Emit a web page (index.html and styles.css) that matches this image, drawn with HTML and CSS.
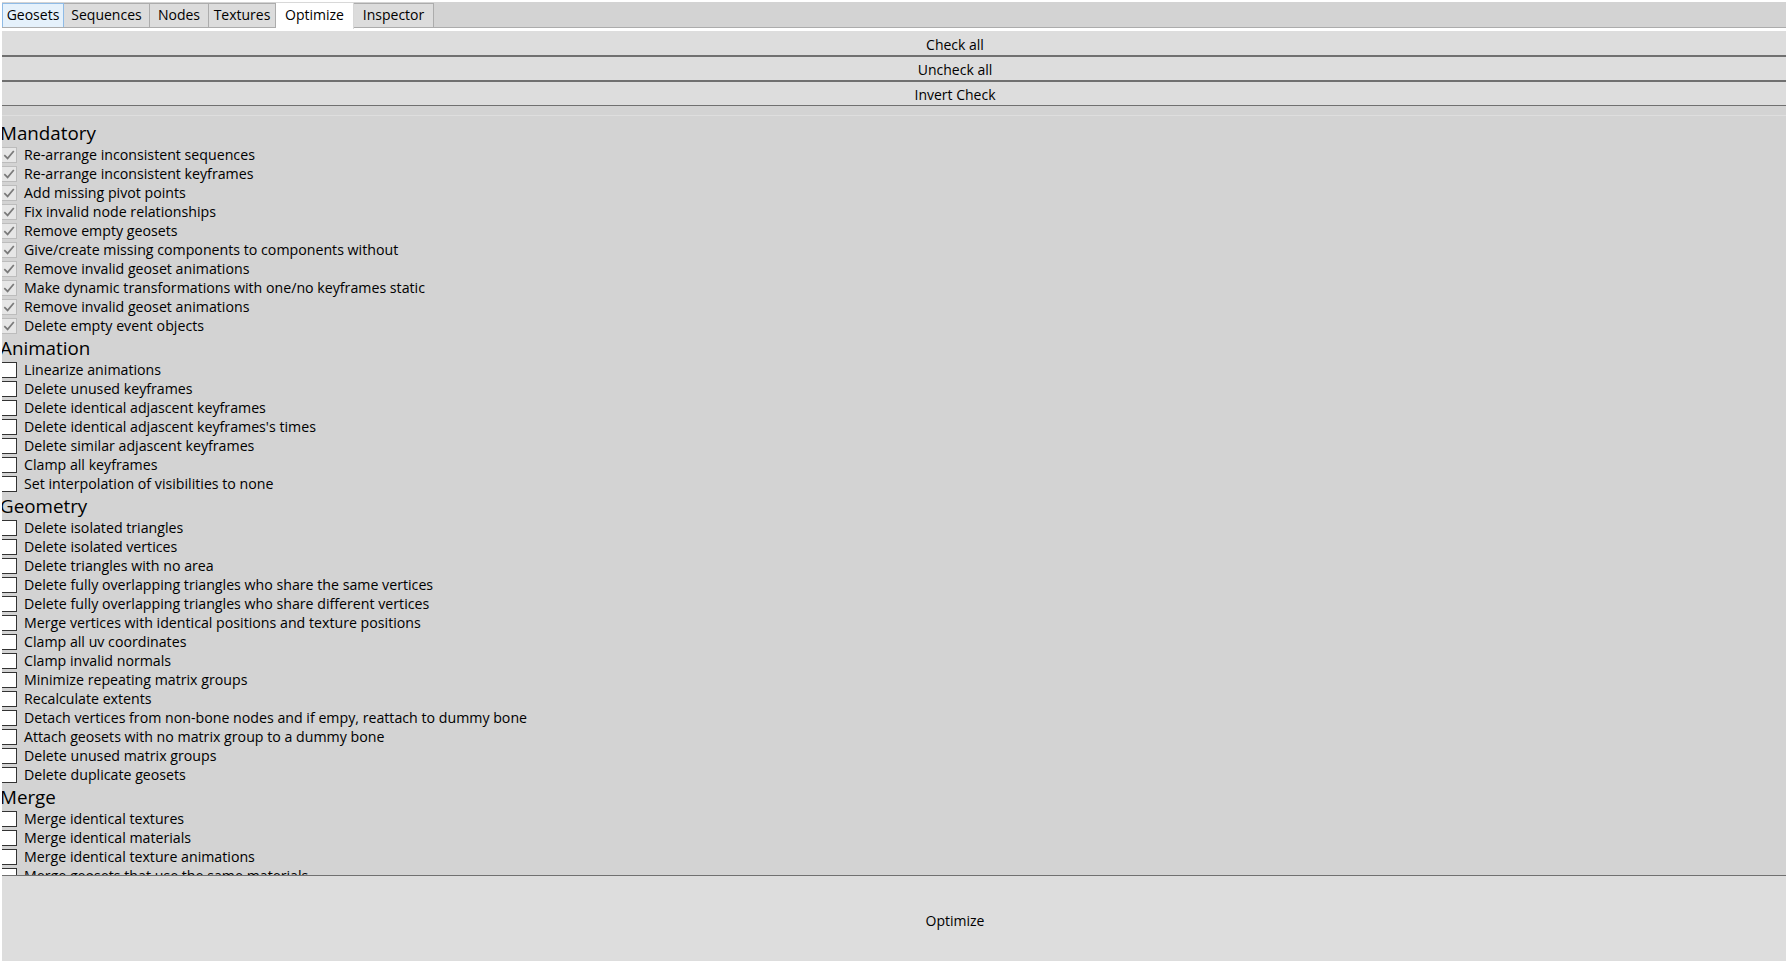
FILE: index.html
```html
<!DOCTYPE html>
<html>
<head>
<meta charset="utf-8">
<link rel="stylesheet" href="styles.css">
</head>
<body>
<div class="app">
  <div class="tabstrip">
    <div class="tab hover w-geo">Geosets</div>
    <div class="tab w-seq">Sequences</div>
    <div class="tab w-nod">Nodes</div>
    <div class="tab w-tex">Textures</div>
    <div class="tab selected w-opt">Optimize</div>
    <div class="tab w-ins">Inspector</div>
  </div>
  <div class="panel">
    <div class="whiteline"></div>
    <div class="btn first">Check all</div>
    <div class="btn">Uncheck all</div>
    <div class="btn">Invert Check</div>
    <div class="spacer"></div>
    <div class="sep"></div>
    <div class="list">
      <div class="hdr">Mandatory</div>
      <div class="item"><span class="box on"><svg viewBox="0 0 14 14"><path d="M2.3 7.2 L5.6 10.4 L11.8 3"/></svg></span><span>Re-arrange inconsistent sequences</span></div>
      <div class="item"><span class="box on"><svg viewBox="0 0 14 14"><path d="M2.3 7.2 L5.6 10.4 L11.8 3"/></svg></span><span>Re-arrange inconsistent keyframes</span></div>
      <div class="item"><span class="box on"><svg viewBox="0 0 14 14"><path d="M2.3 7.2 L5.6 10.4 L11.8 3"/></svg></span><span>Add missing pivot points</span></div>
      <div class="item"><span class="box on"><svg viewBox="0 0 14 14"><path d="M2.3 7.2 L5.6 10.4 L11.8 3"/></svg></span><span>Fix invalid node relationships</span></div>
      <div class="item"><span class="box on"><svg viewBox="0 0 14 14"><path d="M2.3 7.2 L5.6 10.4 L11.8 3"/></svg></span><span>Remove empty geosets</span></div>
      <div class="item"><span class="box on"><svg viewBox="0 0 14 14"><path d="M2.3 7.2 L5.6 10.4 L11.8 3"/></svg></span><span>Give/create missing components to components without</span></div>
      <div class="item"><span class="box on"><svg viewBox="0 0 14 14"><path d="M2.3 7.2 L5.6 10.4 L11.8 3"/></svg></span><span>Remove invalid geoset animations</span></div>
      <div class="item"><span class="box on"><svg viewBox="0 0 14 14"><path d="M2.3 7.2 L5.6 10.4 L11.8 3"/></svg></span><span>Make dynamic transformations with one/no keyframes static</span></div>
      <div class="item"><span class="box on"><svg viewBox="0 0 14 14"><path d="M2.3 7.2 L5.6 10.4 L11.8 3"/></svg></span><span>Remove invalid geoset animations</span></div>
      <div class="item"><span class="box on"><svg viewBox="0 0 14 14"><path d="M2.3 7.2 L5.6 10.4 L11.8 3"/></svg></span><span>Delete empty event objects</span></div>

      <div class="hdr">Animation</div>
      <div class="item"><span class="box"></span><span>Linearize animations</span></div>
      <div class="item"><span class="box"></span><span>Delete unused keyframes</span></div>
      <div class="item"><span class="box"></span><span>Delete identical adjascent keyframes</span></div>
      <div class="item"><span class="box"></span><span>Delete identical adjascent keyframes's times</span></div>
      <div class="item"><span class="box"></span><span>Delete similar adjascent keyframes</span></div>
      <div class="item"><span class="box"></span><span>Clamp all keyframes</span></div>
      <div class="item"><span class="box"></span><span>Set interpolation of visibilities to none</span></div>

      <div class="hdr">Geometry</div>
      <div class="item"><span class="box"></span><span>Delete isolated triangles</span></div>
      <div class="item"><span class="box"></span><span>Delete isolated vertices</span></div>
      <div class="item"><span class="box"></span><span>Delete triangles with no area</span></div>
      <div class="item"><span class="box"></span><span>Delete fully overlapping triangles who share the same vertices</span></div>
      <div class="item"><span class="box"></span><span>Delete fully overlapping triangles who share different vertices</span></div>
      <div class="item"><span class="box"></span><span>Merge vertices with identical positions and texture positions</span></div>
      <div class="item"><span class="box"></span><span>Clamp all uv coordinates</span></div>
      <div class="item"><span class="box"></span><span>Clamp invalid normals</span></div>
      <div class="item"><span class="box"></span><span>Minimize repeating matrix groups</span></div>
      <div class="item"><span class="box"></span><span>Recalculate extents</span></div>
      <div class="item"><span class="box"></span><span>Detach vertices from non-bone nodes and if empy, reattach to dummy bone</span></div>
      <div class="item"><span class="box"></span><span>Attach geosets with no matrix group to a dummy bone</span></div>
      <div class="item"><span class="box"></span><span>Delete unused matrix groups</span></div>
      <div class="item"><span class="box"></span><span>Delete duplicate geosets</span></div>

      <div class="hdr">Merge</div>
      <div class="item"><span class="box"></span><span>Merge identical textures</span></div>
      <div class="item"><span class="box"></span><span>Merge identical materials</span></div>
      <div class="item"><span class="box"></span><span>Merge identical texture animations</span></div>
      <div class="item"><span class="box"></span><span>Merge geosets that use the same materials</span></div>
      <div class="item"><span class="box"></span><span>Merge identical geoset animations</span></div>
    </div>
    <div class="btn bottom">Optimize</div>
  </div>
</div>
</body>
</html>
```
FILE: styles.css
```css
html, body {
  margin: 0;
  padding: 0;
}
body {
  margin: 2px;
  background: #ffffff;
  font-family: "Open Sans", "Noto Sans", "DejaVu Sans", sans-serif;
  color: #000000;
}
.app {
  width: 1784px;
  height: 959px;
  overflow: hidden;
  background: #d3d3d3;
}
.tabstrip {
  display: flex;
  align-items: flex-end;
  height: 25px;
}
.tab {
  box-sizing: border-box;
  height: 24px;
  border: 1px solid #acacac;
  border-bottom: none;
  background: #dcdcdc;
  font-size: 14px;
  line-height: 22px;
  text-align: center;
  white-space: nowrap;
}
.tab + .tab {
  border-left: none;
}
.tab.hover {
  background: #e5f1fb;
  border-color: #8fbbe6;
}
.tab.selected {
  position: relative;
  z-index: 1;
  height: 27px;
  margin-bottom: -2px;
  background: #ffffff;
  border-color: #d8d8d8;
  line-height: 24px;
}
.w-geo { width: 62px; }
.w-seq { width: 86px; }
.w-nod { width: 59px; }
.w-tex { width: 67px; }
.w-opt { width: 78px; }
.w-ins { width: 80px; }

.panel {
  border-top: 1px solid #acacac;
}
.whiteline {
  height: 3px;
  background: #ffffff;
}
.btn {
  box-sizing: border-box;
  width: 1906px;
  height: 25px;
  padding-top: 1px;
  background: #dddddd;
  border: 1px solid #707070;
  border-left: none;
  border-right: none;
  font-size: 14px;
  display: flex;
  align-items: center;
  justify-content: center;
  white-space: nowrap;
}
.btn.first {
  border-top: none;
  padding-top: 2px;
}
.spacer {
  height: 9px;
}
.sep {
  height: 1px;
  background: #dedede;
}
.list {
  box-sizing: border-box;
  height: 759px;
  overflow: hidden;
  margin-left: -2px;
  padding-top: 4px;
}
.hdr {
  height: 25px;
  font-size: 18.8px;
  line-height: 27px;
  white-space: nowrap;
}
.item {
  height: 19px;
  display: flex;
  align-items: center;
  font-size: 14.2px;
  white-space: nowrap;
}
.box {
  box-sizing: border-box;
  width: 16px;
  height: 16px;
  flex-shrink: 0;
  margin-left: 1px;
  margin-right: 7px;
  border: 1px solid #333333;
  background: #ffffff;
  display: flex;
  align-items: center;
  justify-content: center;
}
.box.on {
  border-color: #bcbcbc;
  background: #e6e6e6;
}
.box svg {
  width: 14px;
  height: 14px;
}
.box svg path {
  fill: none;
  stroke: #7a7a7a;
  stroke-width: 1.7;
}
.btn.bottom {
  height: 88px;
  border-bottom: none;
}
```
